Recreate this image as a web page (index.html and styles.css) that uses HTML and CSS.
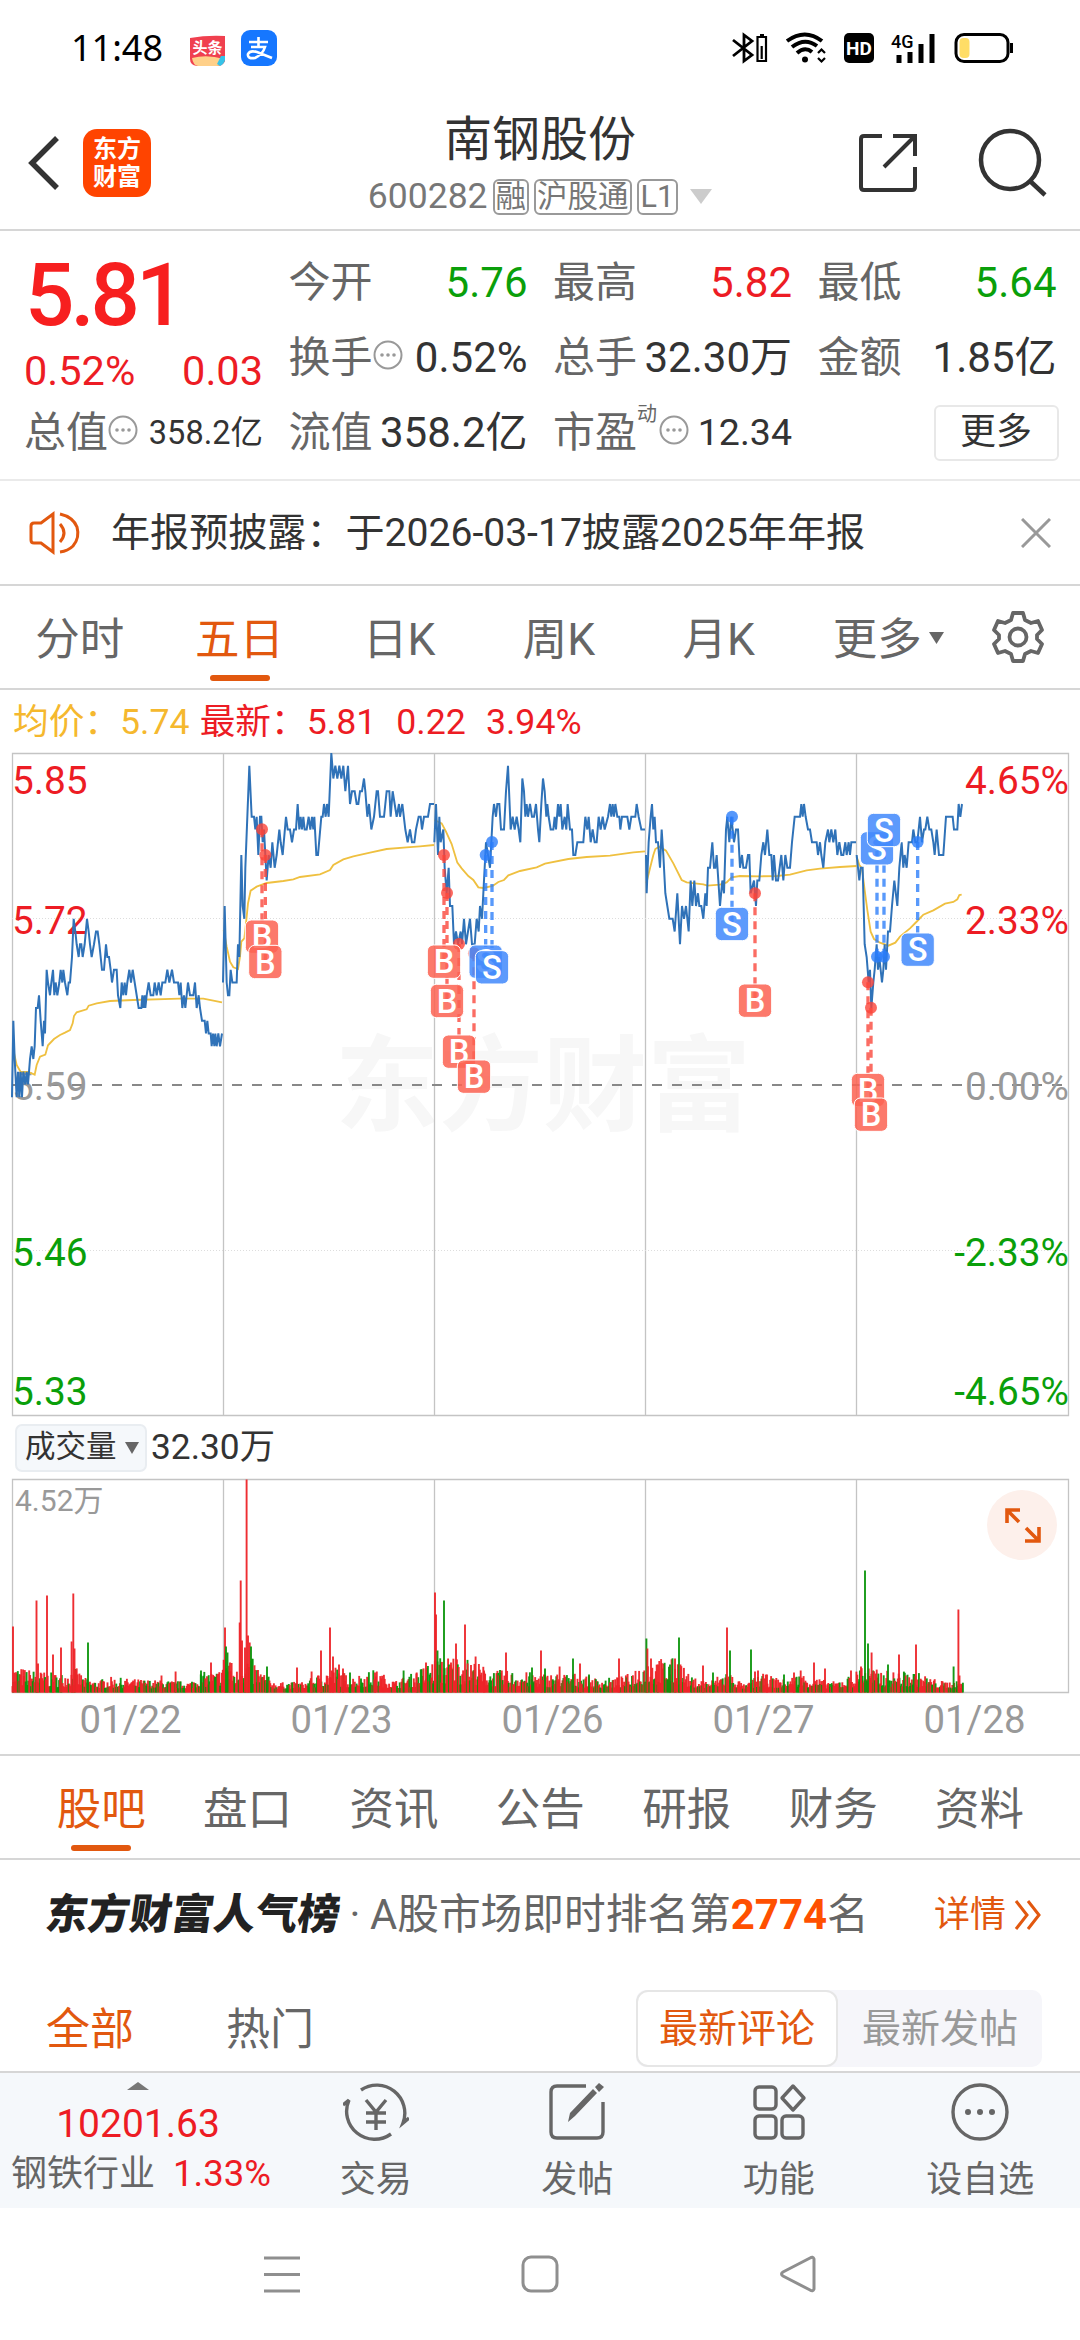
FILE: index.html
```
<!DOCTYPE html>
<html lang="zh-CN">
<head>
	<meta charset="UTF-8">
	<title>南钢股份 600282</title>
	<link rel="stylesheet" href="styles.css">
</head>
<body>
	<div class="status">
		<span class="time">11:48</span>
		<svg class="app-toutiao" width="37" height="32" viewBox="0 0 37 32">
			<path d="M1 3Q18 0 36 1V26Q34 31 28 31H8Q1 30 1 24Z" fill="#f0404f"/>
			<path d="M3 23Q18 19 35 24Q34 31 28 31H9Q4 30 3 23Z" fill="#ffd089"/>
			<path d="M28 29L32 21H36V25Q35 29 31 31Z" fill="#35c3e8"/>
			<text x="18.500" y="18" text-anchor="middle" class="tt">头条</text>
		</svg>
		<svg class="app-pay" width="36" height="36" viewBox="0 0 36 36">
			<rect width="36" height="36" rx="9" fill="#1677ff"/>
			<path d="M8 12H27M17.500 7V17M10 17H24Q22 24 14 28Q6 29 7 24Q9 20 16 22L31 28" fill="none" stroke="#fff" stroke-width="2.600"/>
		</svg>
		<div class="status-right">
			<svg width="36" height="32" viewBox="0 0 36 32" fill="none" stroke="#000" stroke-width="2.800">
				<path d="M1 8L20 23L12 29V3L20 9L1 24"/>
				<path d="M25.500 5H34V29H25.500ZM28 3H32M29.700 14V27" stroke-width="2.200"/>
			</svg>
			<svg width="42" height="32" viewBox="0 0 42 32" fill="none" stroke="#000" stroke-width="4">
				<path d="M2 9Q20 -4 37 9M7 15Q20 5 32 14M12 21Q20 14 27 20"/>
				<circle cx="20" cy="27.500" r="3" fill="#000" stroke="none"/>
				<path d="M33 21L36.500 17.500L40 21M33 26L36.500 29.500L40 26" stroke-width="2.200"/>
			</svg>
			<svg width="30" height="30" viewBox="0 0 30 30">
				<rect width="30" height="30" rx="5"/>
				<text x="15" y="22" text-anchor="middle" class="hd">HD</text>
			</svg>
			<svg width="46" height="32" viewBox="0 0 46 32">
				<text x="0" y="16" class="g4">4G</text>
				<path d="M8 23V31M19 20V31M30 12V31M41 2V31" stroke="#000" stroke-width="5"/>
			</svg>
			<svg width="60" height="32" viewBox="0 0 60 32">
				<rect x="2" y="2.500" width="52" height="27" rx="8" fill="none" stroke="#000" stroke-width="3"/>
				<rect x="5.500" y="6" width="10" height="20" rx="4" fill="#fd6"/>
				<path d="M57.500 11V21" stroke="#000" stroke-width="3"/>
			</svg>
		</div>
	</div>

	<div class="header">
		<svg class="back" width="34" height="56" viewBox="0 0 34 56"><path d="M30 3L5 28L30 53" fill="none" stroke="#333" stroke-width="5.500"/></svg>
		<div class="logo">东方<br>财富</div>
		<div class="name">
			<h1>南钢股份</h1>
			<div class="code">
				<span>600282</span><i>融</i><i>沪股通</i><i>L1</i>
				<svg width="22" height="16" viewBox="0 0 22 16"><path d="M0 0H22L11 15Z" fill="#ccc"/></svg>
			</div>
		</div>
		<svg class="share" width="60" height="60" viewBox="0 0 60 60" fill="none" stroke="#333" stroke-width="4">
			<path d="M24 3H6Q3 3 3 6V54Q3 57 6 57H54Q57 57 57 54V34M35 3H57V23M56 4L26 34"/>
		</svg>
		<svg class="search" width="70" height="70" viewBox="0 0 70 70" fill="none" stroke="#333" stroke-width="4.500">
			<circle cx="32" cy="32" r="29"/><path d="M52 53L67 67"/>
		</svg>
	</div>

	<div class="quote">
		<div class="now">
			<b>5.81</b>
			<div class="row change red"><span>0.52%</span><span>0.03</span></div>
			<div class="row small"><label>总值</label><svg class="tip"><use href="#tip"/></svg><span>358.2亿</span></div>
		</div>
		<div class="col">
			<div class="row"><label>今开</label><span class="green">5.76</span></div>
			<div class="row"><label>换手</label><svg class="tip"><use href="#tip"/></svg><span>0.52%</span></div>
			<div class="row"><label>流值</label><span>358.2亿</span></div>
		</div>
		<div class="col">
			<div class="row"><label>最高</label><span class="red">5.82</span></div>
			<div class="row"><label>总手</label><span>32.30万</span></div>
			<div class="row pe"><label>市盈</label><sup>动</sup><svg class="tip"><use href="#tip"/></svg><span>12.34</span></div>
		</div>
		<div class="col">
			<div class="row"><label>最低</label><span class="green">5.64</span></div>
			<div class="row"><label>金额</label><span>1.85亿</span></div>
			<div class="row"><a class="more">更多</a></div>
		</div>
	</div>

	<div class="notice">
		<svg width="54" height="44" viewBox="0 0 54 44" fill="none" stroke="#e2580f" stroke-width="3">
			<path d="M24 3V41L12 32H5Q2 32 2 29V15Q2 12 5 12H12ZM31 13Q39 22 31 31M31 3Q44 6 48 16Q51 27 44 35Q39 40 31 41"/>
		</svg>
		<p>年报预披露：于2026-03-17披露2025年年报</p>
		<svg width="30" height="30" viewBox="0 0 30 30"><path d="M1 1L29 29M29 1L1 29" stroke="#999" stroke-width="3"/></svg>
	</div>

	<div class="tabs period">
		<a>分时</a><a class="active">五日</a><a>日K</a><a>周K</a><a>月K</a>
		<a class="drop">更多<svg width="15" height="12" viewBox="0 0 15 12"><path d="M0 0H15L7.500 12Z" fill="#666"/></svg></a>
		<a class="set"><svg width="54" height="54" viewBox="0 0 54 54" fill="none" stroke="#666" stroke-width="3.800">
			<path d="M22 3H32L34 10L40 13L47 11L51 20L46 25V29L51 34L47 43L40 41L34 44L32 51H22L20 44L14 41L7 43L3 34L8 29V25L3 20L7 11L14 13L20 10Z" stroke-linejoin="round"/>
			<circle cx="27" cy="27" r="8.500"/>
		</svg></a>
	</div>

	<div class="legend"><span class="avg">均价：5.74</span><span>最新：5.81</span><span>0.22</span><span>3.94%</span></div>

	<svg class="chart" id="price" width="1058" height="664" viewBox="-1 -1 1058 664">
		<text x="531" y="370" text-anchor="middle" class="mark">东方财富</text>
		<path class="frame" d="M0.500 0.500H1056.500V662.500H0.500ZM211.500 0V663M422.500 0V663M633.500 0V663M844.500 0V663"/>
		<path d="M0 165.500H1056M0 497.500H1056" stroke="#ddd" stroke-dasharray="1 2"/>
		<path d="M0 332H1056" stroke="#888" stroke-width="2" stroke-dasharray="10 10"/>
		<g class="axis">
			<text x="0" y="41" fill="#ed1c24">5.85</text>
			<text x="0" y="181" fill="#ed1c24">5.72</text>
			<text x="0" y="347" fill="#999">5.59</text>
			<text x="0" y="513" fill="#0a9f0a">5.46</text>
			<text x="0" y="652" fill="#0a9f0a">5.33</text>
		</g>
		<g id="lines" transform="translate(-12 -13) scale(.33333)"></g>
		<g class="axis" text-anchor="end">
			<text x="1057" y="41" fill="#ed1c24">4.65%</text>
			<text x="1057" y="181" fill="#ed1c24">2.33%</text>
			<text x="1057" y="347" fill="#999">0.00%</text>
			<text x="1057" y="513" fill="#0a9f0a">-2.33%</text>
			<text x="1057" y="652" fill="#0a9f0a">-4.65%</text>
		</g>
	</svg>

	<div class="vol-head">
		<a>成交量<svg width="14" height="12" viewBox="0 0 14 12"><path d="M0 0H14L7 12Z" fill="#666"/></svg></a>
		<span>32.30万</span>
	</div>

	<div class="volume">
		<svg class="chart" width="1058" height="215" viewBox="-1 -1 1058 215">
			<path class="frame" d="M0.500 0.500H1056.500V213.500H0.500ZM211.500 0V213M422.500 0V213M633.500 0V213M844.500 0V213"/>
			<text x="3" y="32" class="max">4.52万</text>
			<g id="bars"></g>
		</svg>
		<svg class="expand" width="70" height="70" viewBox="0 0 70 70">
			<circle cx="35" cy="35" r="35" fill="#fdf0eb"/>
			<path d="M33 20H20V33M20 20L32 32M52 37V51H38M51 50L39 38" fill="none" stroke="#e2580f" stroke-width="3.600"/>
		</svg>
	</div>
	<div class="dates"><span>01/22</span><span>01/23</span><span>01/26</span><span>01/27</span><span>01/28</span></div>

	<div class="tabs info">
		<a class="active">股吧</a><a>盘口</a><a>资讯</a><a>公告</a><a>研报</a><a>财务</a><a>资料</a>
	</div>

	<div class="rank">
		<em>东方财富人气榜</em><span class="dot">·</span>
		<span>A股市场即时排名第</span><b>2774</b><span>名</span>
		<a>详情<svg width="28" height="32" viewBox="0 0 28 32"><path d="M2 2L13 16L2 30M14 2L25 16L14 30" fill="none" stroke="#e2580f" stroke-width="3"/></svg></a>
	</div>

	<div class="filter">
		<a class="active">全部</a><a>热门</a>
		<div class="switch"><span class="on">最新评论</span><span>最新发帖</span></div>
	</div>

	<div class="bottom">
		<div class="sector">
			<svg width="22" height="8" viewBox="0 0 22 8"><path d="M0 8L11 0L22 8Z" fill="#777"/></svg>
			<div class="index">10201.63</div>
			<div class="industry">钢铁行业<span>1.33%</span></div>
		</div>
		<a><svg width="66" height="60" viewBox="0 0 66 60">
			<path d="M18 8A28 28 0 0 1 60 41L66 36M48 52A28 28 0 0 1 6 18L0 23M23 18L33 30L43 18M23 31H43M23 40H43M33 30V48"/>
		</svg>交易</a>
		<a><svg width="60" height="60" viewBox="0 0 60 60">
			<path d="M39 4H10Q4 4 4 10V50Q4 56 10 56H50Q56 56 56 50V20"/>
			<path d="M21 40L23 31L46 7L50 11L28 34ZM48 5L52 1L57 5L52 10Z" fill="#666" stroke="none"/>
		</svg>发帖</a>
		<a><svg width="60" height="60" viewBox="0 0 60 60">
			<rect x="6" y="5" width="21" height="22" rx="4"/><rect x="6" y="34" width="21" height="22" rx="4"/><rect x="33" y="34" width="21" height="22" rx="4"/>
			<path d="M44 4L55 16L44 28L33 16Z" stroke-linejoin="round"/>
		</svg>功能</a>
		<a><svg width="60" height="60" viewBox="0 0 60 60">
			<circle cx="30" cy="30" r="27"/>
			<g fill="#666" stroke="none"><circle cx="18" cy="30" r="3"/><circle cx="30" cy="30" r="3"/><circle cx="42" cy="30" r="3"/></g>
		</svg>设自选</a>
	</div>

	<div class="nav">
		<svg width="38" height="38" viewBox="0 0 38 38"><path d="M1 3H37M1 19.500H37M1 36H37"/></svg>
		<svg width="38" height="38" viewBox="0 0 38 38"><rect x="2" y="2" width="34" height="34" rx="8"/></svg>
		<svg width="38" height="38" viewBox="0 0 38 38"><path d="M35 4V34Q34 37 31 35L4 21Q1 19 4 17L31 3Q34 1 35 4Z"/></svg>
	</div>

	<svg width="0" height="0" class="defs">
		<symbol id="tip" viewBox="0 0 30 30">
			<circle cx="15" cy="15" r="13.500" fill="none" stroke="#999" stroke-width="2"/>
			<g fill="#999"><circle cx="9" cy="15" r="1.800"/><circle cx="15" cy="15" r="1.800"/><circle cx="21" cy="15" r="1.800"/></g>
		</symbol>
	</svg>
	<script src="chart.js"></script>
</body>
</html>
```
FILE: styles.css
```
*{margin:0;padding:0;box-sizing:border-box;}
body{width:1080px;height:2340px;overflow:hidden;background:#fff;color:#333;font-family:Roboto,"Noto Sans CJK SC",sans-serif;line-height:1;}
svg{display:block;flex:none;}
i,em{font-style:normal;}
.defs{position:absolute;}
.red{color:#ed1c24;}
.green{color:#0a9f0a;}

.status{display:flex;align-items:center;height:96px;padding:0 66px 0 71px;color:#000;}
.time{width:118px;font:36px/1 "Noto Sans",sans-serif;}
.app-toutiao{margin-top:5px;}
.app-pay{margin-left:15px;}
.status-right{display:flex;align-items:center;margin-left:auto;}
.status-right svg{margin-left:17px;overflow:visible;}
.tt{font:bold 15px "Noto Sans CJK SC",sans-serif;fill:#fff;}
.hd{font:bold 19px Roboto,sans-serif;fill:#fff;}
.g4{font:500 18px Roboto,sans-serif;}

.header{display:flex;align-items:center;height:135px;padding:0 32px 0 27px;border-bottom:2px solid #d6d6d6;}
.logo{width:68px;height:68px;margin-left:22px;padding-top:6px;border-radius:14px;background:#ff4400;color:#fff;font-size:24px;font-weight:bold;line-height:28px;text-align:center;}
.name{flex:1;padding:2px 0 0 71px;text-align:center;}
.name h1{font-size:48px;font-weight:400;line-height:56px;}
.code{display:flex;align-items:center;justify-content:center;height:38px;margin-top:10px;color:#777;font-size:35.500px;}
.code i{height:36px;margin-left:5px;padding:0 1px;border:2px solid #999;border-radius:6px;font-size:30.500px;line-height:32px;}
.code i:last-of-type{padding:0 2px;}
.code svg{margin-left:12px;}
.share{margin-right:60px;}

.quote{display:flex;height:250px;padding:14px 23px 0 24px;border-bottom:2px solid #eaeaea;}
.row{display:flex;align-items:center;height:75px;padding-top:1px;font-size:42px;white-space:nowrap;}
.row label{color:#666;font-size:42px;}
.row span{margin-left:auto;}
.col{width:239px;margin-left:25.500px;}
.now{width:239px;}
.now b{display:block;height:87px;padding:7px 0 0 1px;color:#f71f1f;font-size:87px;font-weight:500;line-height:86px;letter-spacing:-4px;}
.now .change{justify-content:space-between;height:64px;padding-top:13px;font-size:41.500px;}
.change span{margin-left:0;}
.now .small{height:73px;font-size:32.500px;}
.tip{width:30px;height:30px;margin:-6px 0 0;}
.pe sup{align-self:flex-start;width:19px;margin-top:8px;color:#666;font-size:20px;}
.pe svg{margin-left:3px;}
.pe span{font-size:37.500px;}
.more{width:125px;height:56px;margin:0 -2px 0 auto;border:2px solid #e8e8e8;border-radius:6px;font-size:36px;line-height:50px;text-align:center;}

.notice{display:flex;align-items:center;height:105px;padding:0 29px 0 29px;border-bottom:2px solid #d6d6d6;}
.notice p{flex:1;padding:2px 0 0 28px;font-size:39.100px;white-space:nowrap;}

.tabs{display:grid;height:104px;border-bottom:2px solid #d6d6d6;color:#666;font-size:44.500px;}
.tabs a{display:flex;align-items:center;justify-content:center;position:relative;padding-top:7px;}
.tabs .set{padding-top:0;}
.tabs .active{color:#e2580f;}
.tabs .active:after{content:"";position:absolute;bottom:7px;left:50%;width:60px;height:6px;margin-left:-30px;border-radius:3px;background:#e2580f;}
.period{grid-template-columns:repeat(6,159.700px) 1fr;padding-right:2px;}
.tabs .drop{padding-left:20px;}
.drop svg{margin:0 0 5px 7px;}
.info{grid-template-columns:repeat(7,146.400px);padding-left:28px;}

.legend{display:flex;align-items:center;height:62px;padding:3px 0 0 13px;color:#ed1c24;font-size:35.700px;}
.legend span{margin-right:20px;}
.legend .avg{margin-right:10px;color:#f5b82e;}

.chart{margin-left:11px;overflow:visible;}
.frame{fill:none;stroke:#c4c4c4;stroke-width:1.300;}
.axis{font-size:38.800px;}
.mark{font-size:104px;font-weight:bold;fill:#f7f7f7;}
.max{font-size:30px;fill:#999;}
.badge{font:500 98px Roboto,sans-serif;fill:#fff;text-anchor:middle;}

.vol-head{display:flex;align-items:center;height:62px;padding:1px 0 0 15px;font-size:35.300px;}
.vol-head a{display:flex;align-items:center;width:132px;height:48px;padding-left:8px;border:2px solid #e9edf1;border-radius:7px;background:#f5f8fb;font-size:30.500px;}
.vol-head a svg{margin-left:8px;}
.vol-head span{margin-left:4px;}
.volume{position:relative;height:214px;}
.expand{position:absolute;top:12px;right:23px;}
.dates{display:grid;grid-template-columns:repeat(5,211px);align-items:center;height:64px;padding:0 0 5px 25px;border-bottom:2px solid #d6d6d6;color:#999;font-size:38.300px;text-align:center;}

.rank{display:flex;align-items:center;height:109px;padding:1px 38px 0 46px;color:#666;font-size:41.700px;white-space:nowrap;}
.rank em{width:294px;color:#222;font-size:42px;font-weight:900;transform:skewX(-8deg);}
.rank .dot{width:30px;text-align:center;}
.rank b{color:#ff5000;font-weight:bold;font-size:42px;}
.rank a{display:flex;align-items:center;margin-left:auto;color:#e2580f;font-size:36px;}
.rank a svg{margin-left:8px;}

.filter{display:flex;align-items:center;height:104px;padding:16px 38px 0 46px;border-bottom:2px solid #d6d6d6;color:#666;font-size:44px;}
.filter a{padding-top:4px;margin-right:92px;}
.filter .active{color:#e2580f;}
.switch{display:flex;width:406px;height:77px;margin-left:auto;border-radius:10px;background:#f6f6fa;color:#999;font-size:39px;line-height:79px;}
.switch span{flex:1;text-align:center;}
.switch .on{flex:none;width:202px;border:2px solid #e6e6e6;border-radius:12px;background:#fff;color:#e2580f;line-height:75px;}

.bottom{display:flex;height:135px;background:#f5f8fb;color:#666;font-size:36px;}
.bottom a{width:201.500px;padding:9px 0 0 2px;text-align:center;}
.bottom a svg{margin:0 auto 20px;fill:none;stroke:#666;stroke-width:3.400;}
.sector{width:274px;padding-top:9px;}
.sector svg{margin-left:127px;}
.index{width:276px;padding-top:15px;color:#ed1c24;font-size:39px;text-align:center;}
.industry{padding:12px 0 0 11px;white-space:nowrap;}
.industry span{margin-left:18px;color:#ed1c24;font-size:36.500px;}

.nav{display:flex;justify-content:space-between;padding:47px 263px 0;}
.nav svg{fill:none;stroke:#8f8f8f;stroke-width:3;}
```
FILE: chart.js
```
(function(){
	// [起点x, "x,价格(分) ..."]，x 为 1/3 像素
	var days=[
		[0,"36,558 40,564 44,561 50,558 54,560 58,558 62,560 66,558 70,560 76,559 80,560 84,559 90,561 95,562 100,561 104,562 108,565 113,565 117,566 122,564 128,562 132,564 135,563 140,568 144,567 150,566 154,567 159,568 163,566 167,567 172,566 178,567 182,568 187,567 190,568 195,567 202,566 206,567 210,567 216,569 221,572 226,571 230,570 236,569 240,570 244,570 248,569 254,570 261,572 266,571 270,570 275,569 282,570 288,571 293,571 298,570 306,568 312,568 318,570 322,569 327,569 332,568 336,567 342,568 350,568 354,566 361,565 365,567 370,566 374,567 378,566 382,567 388,568 393,567 398,568 404,567 410,566 416,565 424,565 427,566 430,565 434,566 436,565 440,566 446,567 452,566 460,566 464,567 470,566 476,567 482,566 487,567 496,567 502,568 508,567 516,568 522,567 534,567 538,566 542,567 547,565 552,566 556,565 564,567 570,566 580,566 585,567 590,565 596,566 600,565 606,564 614,564 618,563 622,564 626,563 632,563 635,562 639,563 643,562 646,563 650,562 655,563 660,562 666,563"],
		[0,"669,567 674,573 680,567 684,566 688,566 692,568 697,567 710,567 714,570 718,569 724,577 728,573 733,572 736,576 742,580 748,584 755,580 762,580 766,579 770,580 775,577 780,580 784,580 788,578 792,579 800,575 806,577 812,576 817,578 824,576 830,577 838,579 842,578 848,577 858,580 863,579 870,579 876,578 882,579 888,579 893,581 898,579 902,580 906,579 910,580 914,579 920,579 926,580 931,579 936,580 940,579 943,580 949,577 954,577 964,580 968,580 972,581 977,580 981,581 986,580 994,585 1000,583 1006,584 1012,583 1018,584 1024,583 1030,584 1036,582 1044,584 1050,581 1056,582 1064,582 1070,581 1075,581 1080,582 1086,582 1092,583 1096,582 1102,580 1107,581 1114,579 1122,580 1130,582 1134,582 1140,580 1152,580 1160,582 1168,582 1172,580 1178,582 1184,581 1190,580 1197,581 1200,580 1207,581 1216,579 1223,578 1230,579 1236,578 1243,578 1248,579 1256,580 1262,580 1266,579 1272,580 1284,580 1290,581 1302,581"],
		[1260,"43,578 48,581 54,577 58,580 62,578 70,579 74,576 80,574 86,576 90,573 97,573 102,570 108,571 114,570 122,571 126,570 132,572 138,570 144,571 150,572 156,570 164,570 170,572 176,571 180,573 186,572 192,575 198,578 204,577 210,576 218,580 222,581 228,580 232,581 238,581 243,579 252,579 258,582 264,584 272,579 278,580 284,579 290,580 296,579 301,578 307,583 312,582 316,580 320,581 324,580 330,581 336,580 342,580 348,581 354,579 358,578 364,581 369,583 374,582 379,580 382,581 386,580 392,579 400,579 404,580 408,579 414,581 418,580 422,581 427,579 434,580 439,579 443,581 450,579 456,579 460,577 466,577 472,578 490,578 496,580 502,579 506,580 512,578 518,579 524,578 530,578 536,580 542,579 548,580 554,579 564,580 570,581 574,580 578,581 582,580 586,581 592,580 598,580 601,579 606,580 622,580 628,579 634,580 646,580 650,581 656,580 664,579 675,579"],
		[1260,"678,577 680,574 686,578 692,580 696,581 700,579 704,580 708,578 714,578 720,576 725,579 730,577 736,574 742,573 748,572 758,572 764,571 772,574 780,570 786,573 792,572 798,573 806,571 812,575 817,573 823,575 828,573 834,574 838,573 844,573 850,572 856,574 860,573 864,576 870,576 877,578 882,576 886,576 890,577 895,575 900,573 907,575 912,574 918,579 922,580 928,578 934,580 938,579 942,578 948,579 954,579 960,576 966,577 970,576 978,576 984,577 988,577 992,574 1002,575 1008,573 1012,575 1018,575 1024,577 1030,578 1035,577 1042,579 1048,577 1054,577 1058,575 1062,577 1068,575 1074,575 1084,577 1090,575 1096,577 1102,576 1110,576 1116,578 1124,580 1140,580 1144,581 1148,580 1152,581 1157,580 1164,579 1170,579 1176,578 1190,578 1194,577 1200,578 1204,577 1210,576 1216,578 1224,579 1228,578 1234,579 1240,578 1246,579 1252,577 1258,578 1264,577 1270,577 1276,578 1280,577 1286,578 1290,577 1294,578 1308,578"],
		[2220,"350,577 354,576 358,575 362,576 368,576 374,570 380,569 386,567 390,568 394,565 400,567 404,568 410,570 414,568 418,569 422,568 426,567 430,568 434,570 438,568 444,571 450,571 456,573 463,575 472,573 478,576 485,578 490,576 494,577 500,576 506,578 516,578 520,579 526,578 532,578 540,580 546,578 552,579 556,579 562,580 568,579 574,579 580,578 584,577 590,579 597,577 610,577 618,580 638,580 642,579 652,579 656,581 661,580 666,581"]
	];
	// 均价线
	var avgs=[
		[0,"40 930 50 975 62 996 85 996 104 1004 110 975 120 950 136 944 144 916 162 897 180 885 195 878 210 870 218 850 222 828 230 817 260 808 266 797 290 790 330 783 400 780 540 776 610 776 640 782 666 787"],
		[0,"671 570 680 620 690 665 700 682 714 687 720 650 724 605 733 595 738 550 744 490 752 452 770 440 800 429 850 423 880 418 900 411 960 403 990 390 1000 375 1030 358 1060 349 1110 338 1160 327 1220 322 1260 319 1302 315"],
		[1260,"43 240 65 250 78 275 95 312 112 368 125 385 145 408 160 420 175 442 190 444 218 438 235 426 252 420 265 406 300 393 350 382 375 371 445 357 500 351 570 347 640 337 675 334"],
		[1260,"679 430 690 385 700 345 706 327 718 320 738 332 760 370 785 420 800 427 850 433 862 437 900 434 920 427 935 412 960 408 1020 409 1070 408 1110 404 1160 391 1200 386 1260 381 1310 378"],
		[2220,"350 350 358 375 366 385 374 450 382 510 392 575 402 597 420 608 445 617 466 608 480 590 510 565 532 543 550 524 580 511 615 491 640 486 652 478 658 465 665 464"]
	];
	// 买卖点：类型, x, 成交点y, 标签y
	var trades=[
		["B",786,268,590],["B",796,345,666],
		["B",1332,345,665],["B",1341,459,783],["B",1377,612,935],["B",1422,640,1010],
		["S",1457,345,665],["S",1476,306,682],["S",2196,230,552],
		["B",2265,460,782],
		["S",2631,650,325],["S",2652,650,270],["S",2753,306,629],
		["B",2604,727,1050],["B",2613,803,1124]
	];
	var html="",i;
	for(i=0;i<avgs.length;i++){
		html+='<polyline transform="translate('+avgs[i][0]+')" points="'+avgs[i][1]+'" fill="none" stroke="#efc040" stroke-width="5.5"/>';
	}
	for(i=0;i<days.length;i++){
		var pts=days[i][1].split(" ").map(function(p){
			p=p.split(",");
			return p[0]+","+(39+(585-p[1])*38.25).toFixed(1);
		}).join(" ");
		html+='<polyline transform="translate('+days[i][0]+')" points="'+pts+'" fill="none" stroke="#2f72b8" stroke-width="6"/>';
	}
	trades.forEach(function(t){
		var c=t[0]=="B" ? "#fb4438" : "#2a7dfa";
		html+='<path d="M'+t[1]+' '+t[2]+'V'+t[3]+'" stroke="'+c+'" stroke-width="10" stroke-dasharray="24 18" opacity=".78"/>'+
			'<circle cx="'+t[1]+'" cy="'+t[2]+'" r="18" fill="'+c+'" opacity=".8"/>';
	});
	trades.forEach(function(t){
		var c=t[0]=="B" ? "#fb6353" : "#4289fb";
		html+='<rect x="'+(t[1]-50)+'" y="'+(t[3]-50)+'" width="100" height="100" rx="18" fill="'+c+'" fill-opacity=".86" stroke="#fff" stroke-width="3"/>'+
			'<text class="badge" x="'+t[1]+'" y="'+(t[3]+35)+'">'+t[0]+'</text>';
	});
	document.getElementById("lines").innerHTML=html;

	// 成交量：包络 + 放量柱
	var env=[[12,26],[30,22],[60,17],[75,25],[85,13],[95,10],[110,14],[130,12],[190,9],[200,19],[218,20],[226,44],[236,20],[244,40],[252,34],[262,21],[275,8],[305,9],[320,18],[335,26],[350,14],[375,22],[395,10],[415,19],[434,34],[455,38],[475,31],[490,22],[515,20],[545,18],[575,18],[600,12],[625,15],[645,34],[680,34],[690,14],[710,10],[727,22],[745,5],[760,18],[785,11],[800,18],[820,12],[835,9],[855,18],[862,31],[875,22],[895,20],[915,20],[940,10],[963,9]];
	var spikes="13,66 36.5,92 38,29 47,97 53,38 61,45 71.6,51 73.3,99 74.5,44 88,50g 161.5,17 175.6,21 201,22g 211,30 225,65 226,46g 227.5,40g 230,30 239.7,70 240.7,112 242,52 245,45 246.6,213 248,57 249.7,50 251,46g 267,26g 297,25 311.6,21 321,42 330,65 333,36 339,28 343,24 350,20g 375,20 403.6,22g 416.7,20 426,30 435,100 436,78 437.5,42g 444,92g 451,30 456,49 465,68 467.6,29 475.6,36 484,22 506,40 532,25g 541,42 545,24g 559.6,26 573,34g 580,29 589,18g 619,34 646.4,54g 647.4,44 651,34 658,28 670,28g 675,34 679,55g 680.5,28 703,27 713,20g 727,65 730,42g 751,43g 755,21 758,22 767,18 784,18g 794,20 800.7,22 814,30 825,24 851,22 861,26 865,122g 868,49g 871.6,40 888,28g 899,38 916,48 953.6,26g 958.4,83 959.5,17".split(" ");
	var seed=7,k=0,bars="";
	function rnd(){
		seed=(seed*16807)%2147483647;
		return seed/2147483647;
	}
	function bar(x,h,green){
		bars+='<path d="M'+(x-12).toFixed(1)+' 213.500V'+(213.5-h).toFixed(1)+'" stroke="'+(green ? "#0a940a" : "#ee2328")+'" stroke-width="1.900" opacity=".95"/>';
	}
	for(var x=12.5;x<963;x+=.88){
		while(x>env[k+1][0]){k++;}
		var a=env[k],b=env[k+1],e=a[1]+(b[1]-a[1])*(x-a[0])/(b[0]-a[0]);
		bar(x,2.5+e*(.15+.8*Math.pow(rnd(),1.3)),rnd()<.34);
	}
	spikes.forEach(function(s){
		s=s.split(",");
		bar(+s[0],parseFloat(s[1]),s[1].indexOf("g")>0);
	});
	document.getElementById("bars").innerHTML=bars;
}());
```
